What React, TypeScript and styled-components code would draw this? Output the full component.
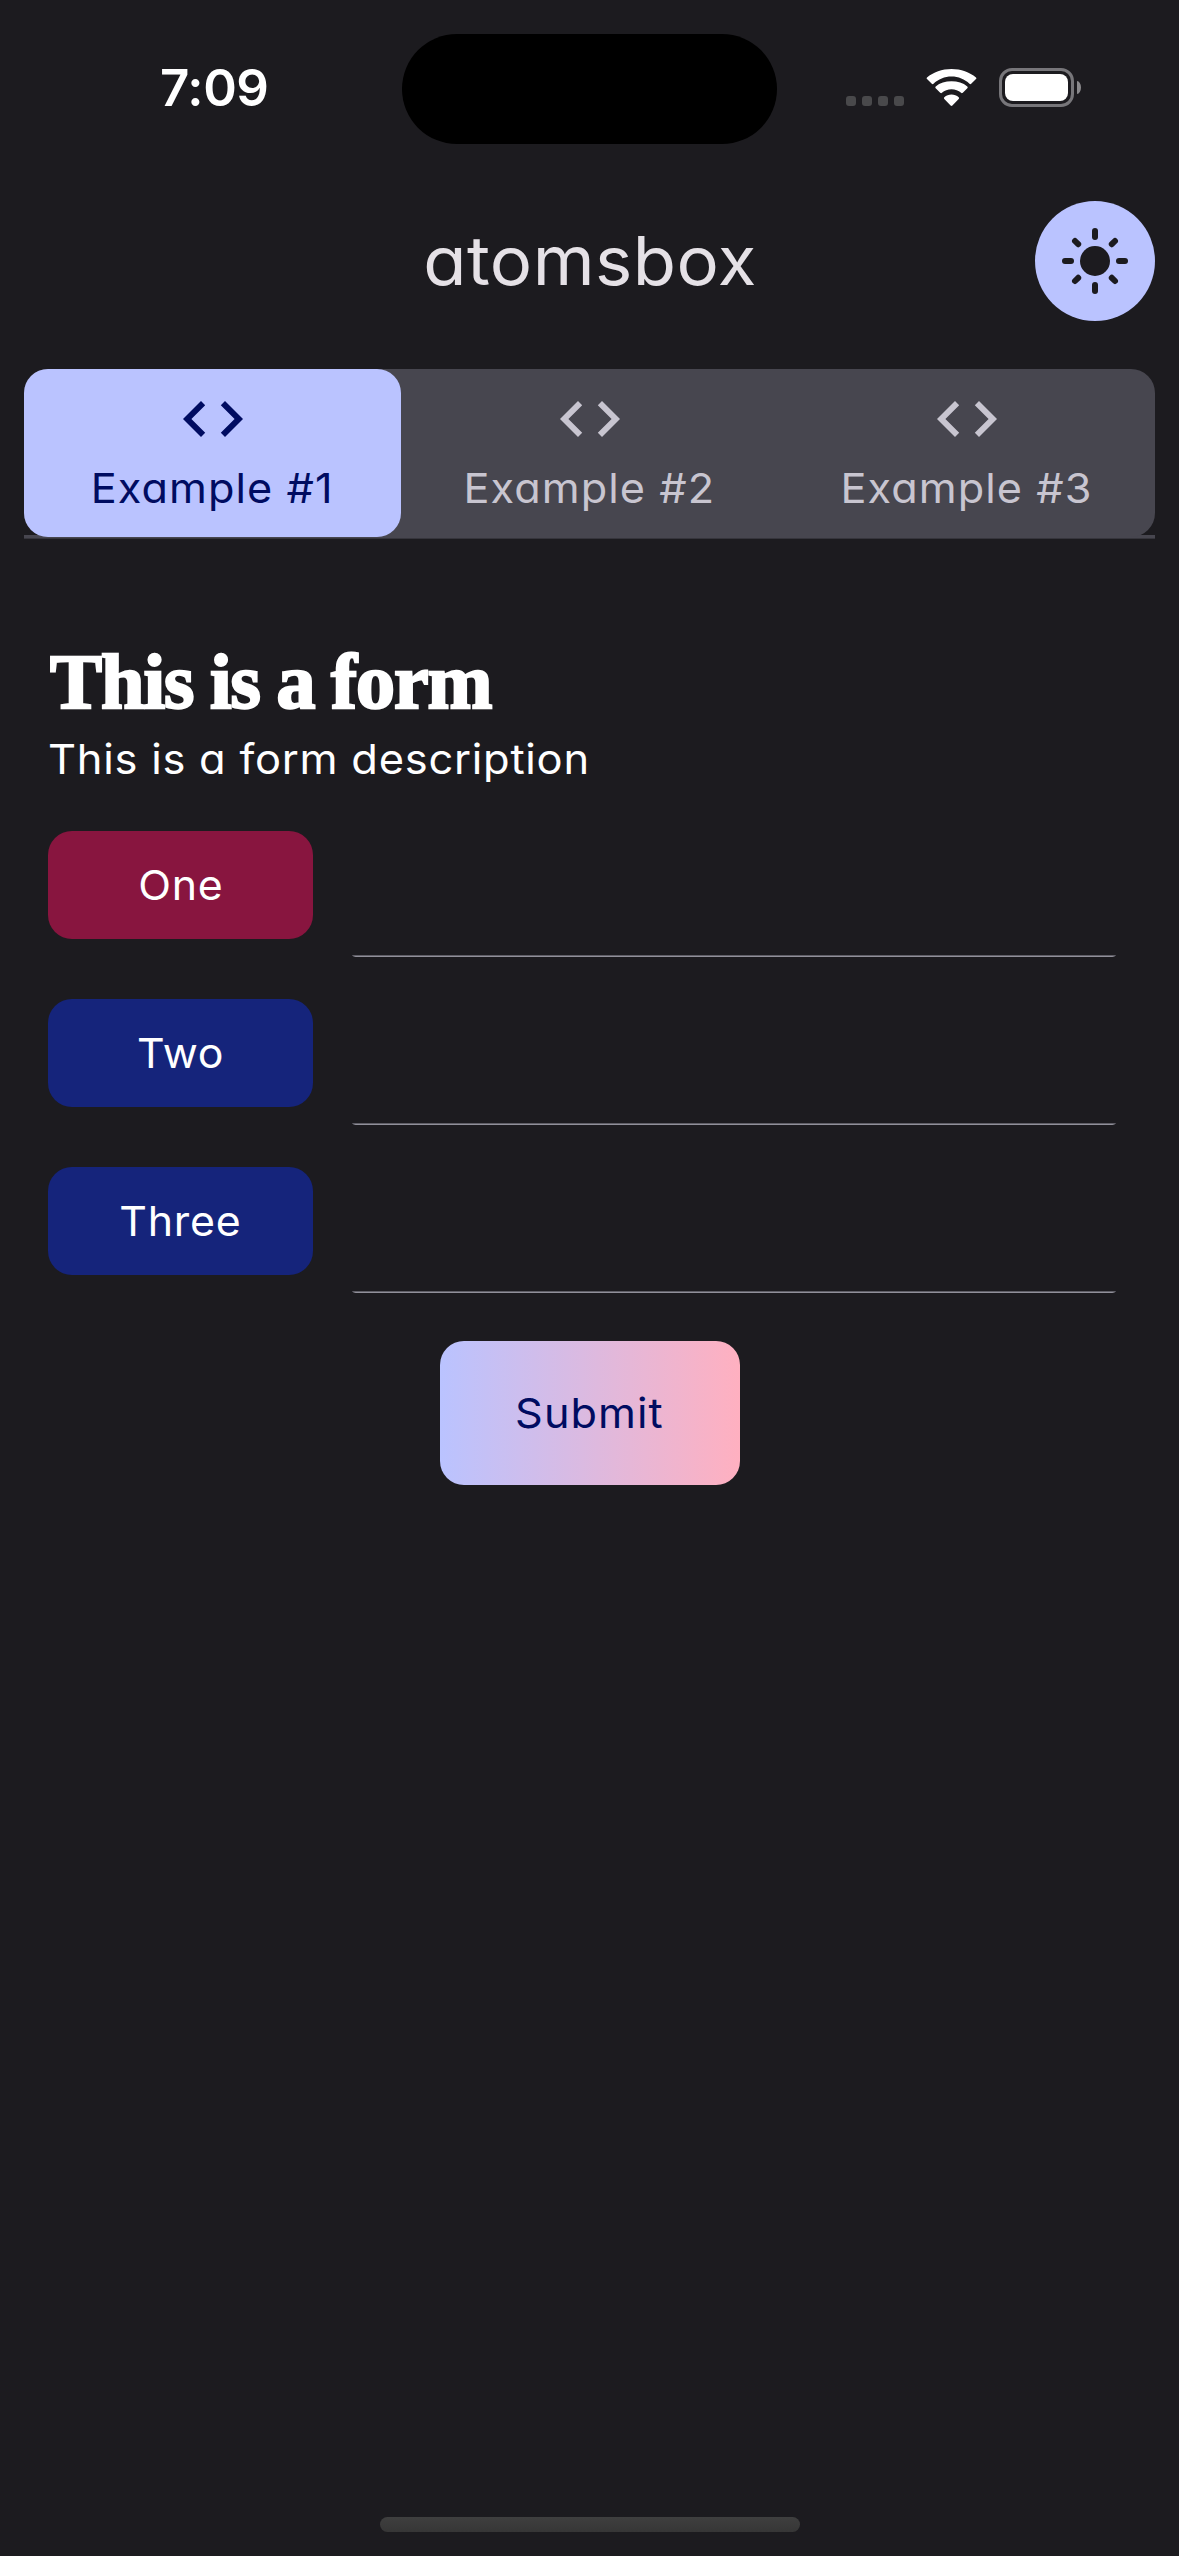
import React, { useState } from "react";
import styled, { createGlobalStyle } from "styled-components";
import { MdCode } from "react-icons/md";

const colors = {
  background: "#1c1b1f",
  primary: "#bac3ff",
  onPrimary: "#000c61",
  surfaceVariant: "#47464f",
  onSurfaceVariant: "#c8c5d0",
  onSurface: "#e5e1e6",
  secondary: "#ffb0c0",
  label: "#15247b",
  labelAccent: "#88153f",
};

const GlobalStyle = createGlobalStyle`
  * { box-sizing: border-box; }
  body {
    margin: 0;
    background: ${colors.background};
    font-family: Inter, "Open Sans", sans-serif;
    font-feature-settings: "cv11";
  }
  button { font: inherit; font-feature-settings: inherit; border: 0; padding: 0; cursor: pointer; }
`;

const Screen = styled.div`
  width: 1179px;
  height: 2556px;
  display: flex;
  flex-direction: column;
  overflow: hidden;
  background: ${colors.background};
`;

const WideText = styled.span<{ $stretch: number; $origin?: string }>`
  display: inline-block;
  transform: scaleX(${(p) => p.$stretch});
  transform-origin: ${(p) => p.$origin ?? "center"};
`;

const StatusBar = styled.header`
  height: 177px;
  flex: none;
  display: grid;
  grid-template-columns: 402px 375px 402px;
  align-items: start;
`;

const Clock = styled.time`
  padding: 58px 0 0 160px;
  font-size: 51px;
  line-height: 60px;
  font-weight: 600;
  letter-spacing: -0.4px;
  color: #fff;
`;

const Island = styled.div`
  height: 110px;
  margin-top: 34px;
  border-radius: 55px;
  background: #000;
`;

const StatusIcons = styled.div`
  height: 39px;
  margin-top: 68px;
  padding-left: 69px;
  display: flex;
  align-items: flex-end;
`;

const SignalDots = styled.div`
  display: flex;
  gap: 6px;
  margin: 0 22px 1px 0;
`;

const Dot = styled.span`
  width: 10px;
  height: 10px;
  border-radius: 3px;
  background: #49494b;
`;

const WifiIcon = styled.svg`
  width: 51px;
  height: 38px;
  margin-right: 22px;
`;

const Battery = styled.div`
  width: 75px;
  height: 39px;
  padding: 3px;
  border: 3px solid #77767a;
  border-radius: 13px;
`;

const BatteryLevel = styled.div`
  height: 27px;
  border-radius: 8px;
  background: #fff;
`;

const BatteryCap = styled.div`
  width: 4px;
  height: 13px;
  margin: 0 0 13px 3px;
  border-radius: 0 4px 4px 0 / 0 6.5px 6.5px 0;
  background: #8a898c;
`;

const AppBar = styled.div`
  height: 168px;
  flex: none;
  padding: 0 24px;
  display: grid;
  grid-template-columns: 120px 1fr 120px;
  align-items: center;
`;

const AppTitle = styled.h1`
  grid-column: 2;
  margin: 0;
  text-align: center;
  font-size: 67px;
  font-weight: 400;
  line-height: 90px;
  letter-spacing: 0.4px;
  color: ${colors.onSurface};
`;

const ThemeButton = styled.button`
  width: 120px;
  height: 120px;
  border-radius: 50%;
  display: grid;
  place-items: center;
  background: ${colors.primary};
  color: ${colors.background};
`;

const TabBar = styled.nav`
  height: 170px;
  flex: none;
  margin: 24px 24px 0;
  background: linear-gradient(${colors.surfaceVariant} 3px, #36353c 3px) 0 166px / 100% 4px no-repeat;
`;

const TabTrack = styled.div`
  height: 168px;
  display: grid;
  grid-template-columns: repeat(3, 1fr);
  border-radius: 24px;
  background: ${colors.surfaceVariant};
`;

const TabButton = styled.button<{ $active: boolean }>`
  height: 168px;
  display: flex;
  flex-direction: column;
  align-items: center;
  padding-top: 14px;
  gap: 3px;
  border-radius: 24px;
  background: ${(p) => (p.$active ? colors.primary : "transparent")};
  color: ${(p) => (p.$active ? colors.onPrimary : colors.onSurfaceVariant)};
  font-weight: 400;
  svg { display: block; }
`;

const TabLabel = styled(WideText)`
  font-size: 41px;
  line-height: 60px;
  letter-spacing: 1px;
  white-space: nowrap;
`;

const Form = styled.form`
  padding: 95px 48px 0;
  display: flex;
  flex-direction: column;
`;

const FormTitle = styled.h2`
  margin: 0;
  padding-left: 2px;
  font-family: "Liberation Serif", serif;
  font-size: 78px;
  font-weight: 700;
  line-height: 95px;
  letter-spacing: -1px;
  word-spacing: -2px;
  -webkit-text-stroke: 2.4px #fff;
  color: #fff;
`;

const FormDescription = styled.p`
  margin: 0 0 42px;
  font-size: 41px;
  line-height: 60px;
  letter-spacing: 0.7px;
  color: #fff;
`;

const FieldRow = styled.div`
  height: 126px;
  margin-bottom: 42px;
  padding-right: 15px;
  display: flex;
  gap: 39px;
`;

const FieldLabel = styled.label<{ $accent: boolean }>`
  width: 265px;
  height: 108px;
  flex: none;
  border-radius: 24px;
  display: grid;
  place-items: center;
  background: ${(p) => (p.$accent ? colors.labelAccent : colors.label)};
  color: #fff;
  font-size: 41px;
  letter-spacing: 0.7px;
`;

const Field = styled.div`
  flex: 1;
  display: flex;
  flex-direction: column;
`;

const FieldInput = styled.input`
  height: 124px;
  width: 100%;
  border: 0;
  outline: 0;
  padding: 0 12px;
  background: transparent;
  color: #fff;
  font: inherit;
  font-size: 41px;
`;

const FieldUnderline = styled.div`
  height: 2px;
  border-radius: 0 0 6px 6px / 0 0 2px 2px;
  background: linear-gradient(#5f5e66 1px, #91909a 1px);
`;

const SubmitButton = styled.button`
  align-self: center;
  width: 300px;
  height: 144px;
  margin-top: 6px;
  border-radius: 24px;
  background: linear-gradient(90deg, ${colors.primary}, ${colors.secondary});
  color: ${colors.onPrimary};
  font-size: 41px;
  font-weight: 400;
  letter-spacing: 1px;
`;

const HomeIndicator = styled.div`
  width: 420px;
  height: 15px;
  flex: none;
  margin: auto auto 24px;
  border-radius: 8px;
  background: linear-gradient(#3f3f3f, #363636);
`;

const rays = [0, 90, 180, 270];

function SunIcon() {
  return (
    <svg width="72" height="72" viewBox="-36 -36 72 72" stroke="currentColor" strokeWidth="6" strokeLinecap="round">
      <circle r="15" fill="currentColor" stroke="none" />
      {rays.map((angle) => (
        <g key={angle} transform={`rotate(${angle})`}>
          <path d="M0-30v6" />
          <path d="M-20-20l3.2 3.2" />
        </g>
      ))}
    </svg>
  );
}

function Wifi() {
  return (
    <WifiIcon viewBox="0 0 51 38" fill="#fff">
      <path d="M25.5 7.6c6.9 0 13.200 2.700 18 7.200.500.500 1.200.500 1.700 0l4.800-4.700c.500-.500.500-1.200 0-1.700C43.600 3.200 35 0 25.500 0S7.400 3.200 1 8.400c-.500.500-.500 1.200 0 1.700l4.800 4.700c.500.500 1.200.500 1.700 0 4.800-4.500 11.100-7.200 18-7.200z" />
      <path d="M25.500 20.300c3.700 0 7 1.300 9.600 3.500.500.500 1.200.400 1.700-.100l4.500-4.500c.500-.500.500-1.300 0-1.800-4.200-3.600-9.700-5.200-15.800-5.200S13.900 13.800 9.700 17.400c-.500.500-.500 1.300 0 1.800l4.500 4.500c.500.500 1.200.600 1.700.100 2.600-2.200 5.900-3.500 9.600-3.500z" />
      <path d="M32.700 28.200c.500.500.500 1.200 0 1.700l-6.300 6.700c-.500.500-1.300.500-1.800 0l-6.300-6.700c-.500-.500-.500-1.200 0-1.700 2-1.600 4.500-2.700 7.200-2.700s5.200 1.100 7.200 2.700z" />
    </WifiIcon>
  );
}

const tabs = ["Example #1", "Example #2", "Example #3"];

const fields = [
  { id: "one", label: "One", accent: true },
  { id: "two", label: "Two", accent: false },
  { id: "three", label: "Three", accent: false },
];

export default function App() {
  const [active, setActive] = useState(0);
  return (
    <Screen>
      <GlobalStyle />
      <StatusBar>
        <Clock>7:09</Clock>
        <Island />
        <StatusIcons>
          <SignalDots>
            <Dot />
            <Dot />
            <Dot />
            <Dot />
          </SignalDots>
          <Wifi />
          <Battery>
            <BatteryLevel />
          </Battery>
          <BatteryCap />
        </StatusIcons>
      </StatusBar>
      <AppBar>
        <AppTitle>
          <WideText $stretch={1.055}>atomsbox</WideText>
        </AppTitle>
        <ThemeButton type="button" aria-label="Toggle theme">
          <SunIcon />
        </ThemeButton>
      </AppBar>
      <TabBar>
        <TabTrack>
          {tabs.map((tab, i) => (
            <TabButton key={tab} type="button" $active={i === active} onClick={() => setActive(i)}>
              <MdCode size={72} />
              <TabLabel $stretch={1.055}>{tab}</TabLabel>
            </TabButton>
          ))}
        </TabTrack>
      </TabBar>
      <Form onSubmit={(e) => e.preventDefault()}>
        <FormTitle>This is a form</FormTitle>
        <FormDescription>
          <WideText $stretch={1.06} $origin="left">
            This is a form description
          </WideText>
        </FormDescription>
        {fields.map((field) => (
          <FieldRow key={field.id}>
            <FieldLabel htmlFor={field.id} $accent={field.accent}>
              <WideText $stretch={1.045}>{field.label}</WideText>
            </FieldLabel>
            <Field>
              <FieldInput id={field.id} />
              <FieldUnderline />
            </Field>
          </FieldRow>
        ))}
        <SubmitButton type="submit">
          <WideText $stretch={1.055}>Submit</WideText>
        </SubmitButton>
      </Form>
      <HomeIndicator />
    </Screen>
  );
}
